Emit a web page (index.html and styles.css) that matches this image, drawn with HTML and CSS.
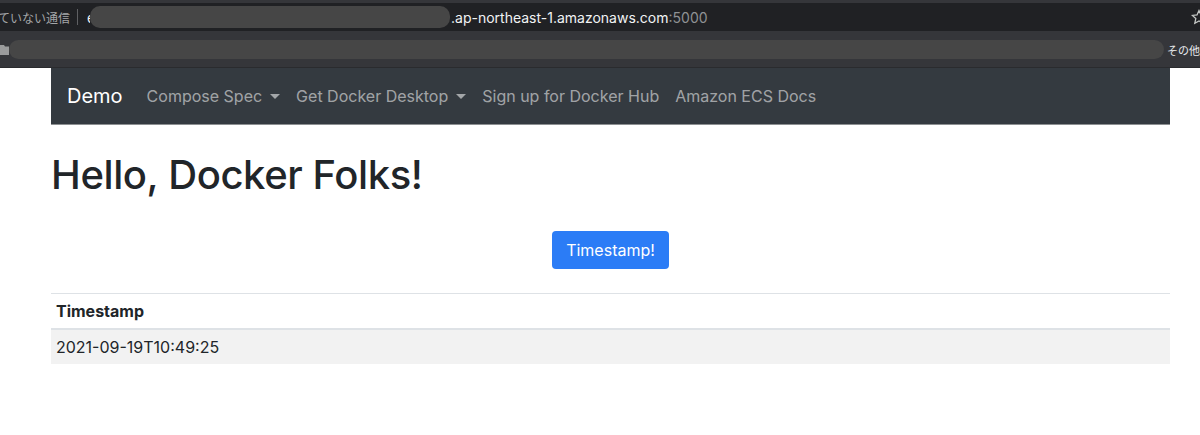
FILE: index.html
```html
<!DOCTYPE html>
<html lang="en">
<head>
    <meta charset="UTF-8">
    <meta name="viewport" content="width=device-width, initial-scale=1.0">
    <title>Demo</title>
    <link rel="stylesheet" href="styles.css">
</head>
<body>

    <!-- Browser chrome -->
    <div class="browser">
        <div class="address-bar">
            <span class="insecure">ていない通信</span>
            <span class="divider"></span>
            <span class="host-start">e</span>
            <span class="redact redact-host"></span>
            <span class="host">.ap-northeast-1.amazonaws.com</span><span class="port">:5000</span>
            <svg class="star" width="16" height="16" viewBox="0 0 16 16">
                <path d="M8 1.5l2 4.4 4.7.5-3.5 3.2 1 4.7L8 11.9l-4.2 2.4 1-4.7L1.3 6.4 6 5.9z" fill="none" stroke="#c4c7c5" stroke-width="1.3"/>
            </svg>
        </div>
        <div class="bookmarks">
            <svg class="folder" width="9" height="12" viewBox="0 0 9 12">
                <path d="M0 1h4l1 1.500h4V11H0z" fill="#9a9b9c"/>
            </svg>
            <span class="redact redact-bookmarks"></span>
            <span class="other">その他</span>
        </div>
    </div>

    <div class="container">
        <!-- Navbar -->
        <nav class="navbar">
            <a class="brand">Demo</a>
            <a class="nav-link dropdown">Compose Spec</a>
            <a class="nav-link dropdown">Get Docker Desktop</a>
            <a class="nav-link">Sign up for Docker Hub</a>
            <a class="nav-link">Amazon ECS Docs</a>
        </nav>

        <h1>Hello, Docker Folks!</h1>

        <div class="actions">
            <button class="btn">Timestamp!</button>
        </div>

        <table>
            <thead>
                <tr><th>Timestamp</th></tr>
            </thead>
            <tbody>
                <tr><td>2021-09-19T10:49:25</td></tr>
            </tbody>
        </table>
    </div>

</body>
</html>
```

FILE: styles.css
```css
* {
    margin: 0;
    padding: 0;
    box-sizing: border-box;
}

body {
    font-family: 'Inter', 'Liberation Sans', sans-serif;
    background-color: white;
    color: #212529;
    overflow: hidden;
}

.browser {
    height: 68px;
    padding-top: 3px;
    background-color: #35363a;
    border-bottom: 1px solid #2a2b2e;
}

.address-bar {
    display: flex;
    align-items: center;
    height: 28px;
    background-color: #202124;
    color: #f1f3f4;
    font-size: 14px;
    white-space: nowrap;
}

.insecure {
    width: 70px;
    overflow: hidden;
    display: flex;
    justify-content: flex-end;
    color: #a4a6a8;
    font-size: 12px;
    font-family: 'Noto Sans CJK JP', sans-serif;
}

.divider {
    width: 1px;
    height: 16px;
    margin-left: 7px;
    background-color: #5f6063;
}

.host-start {
    margin-left: 9px;
    width: 3px;
    overflow: hidden;
}

.redact {
    display: block;
    background-color: #464646;
    border-radius: 10px;
}

.redact-host {
    width: 360px;
    height: 22px;
    margin-right: 1px;
}

.port {
    color: #8f9194;
}

.star {
    margin-left: auto;
    margin-right: -7px;
}

.bookmarks {
    display: flex;
    align-items: center;
    height: 36px;
    padding-top: 1px;
    font-size: 11px;
    color: #e8eaed;
    white-space: nowrap;
}

.folder {
    flex-shrink: 0;
}

.redact-bookmarks {
    width: 1169px;
    height: 19px;
    margin-right: 3px;
}

.other {
    font-family: 'Noto Sans CJK JP', sans-serif;
}

.container {
    margin: 0 30px 0 51px;
}

.navbar {
    display: flex;
    align-items: center;
    height: 57px;
    padding-left: 16px;
    background-color: #343a40;
    border-bottom: 1px solid #8d9092;
}

.brand {
    margin-right: 16px;
    font-size: 20px;
    color: white;
}

.nav-link {
    padding: 0 8px;
    font-size: 16px;
    color: rgba(255, 255, 255, 0.55);
}

.dropdown::after {
    content: "";
    display: inline-block;
    margin-left: 8px;
    vertical-align: 3px;
    border-top: 5px solid;
    border-left: 5px solid transparent;
    border-right: 5px solid transparent;
}

h1 {
    margin-top: 26px;
    font-size: 40px;
    font-weight: 500;
    line-height: 48px;
    letter-spacing: -0.4px;
}

.actions {
    display: flex;
    justify-content: center;
    margin-top: 32px;
}

.btn {
    padding: 0 14px;
    height: 38px;
    font-family: inherit;
    font-size: 16px;
    color: white;
    background-color: #2b7cf6;
    border: none;
    border-radius: 4px;
}

table {
    width: 100%;
    margin-top: 24px;
    border-collapse: collapse;
    font-size: 16px;
}

th, td {
    padding: 8px 5px;
    text-align: left;
    line-height: 18px;
}

th {
    font-weight: 700;
    border-top: 1px solid #dee2e6;
    border-bottom: 2px solid #dee2e6;
}

td {
    background-color: #f2f2f2;
}
```
